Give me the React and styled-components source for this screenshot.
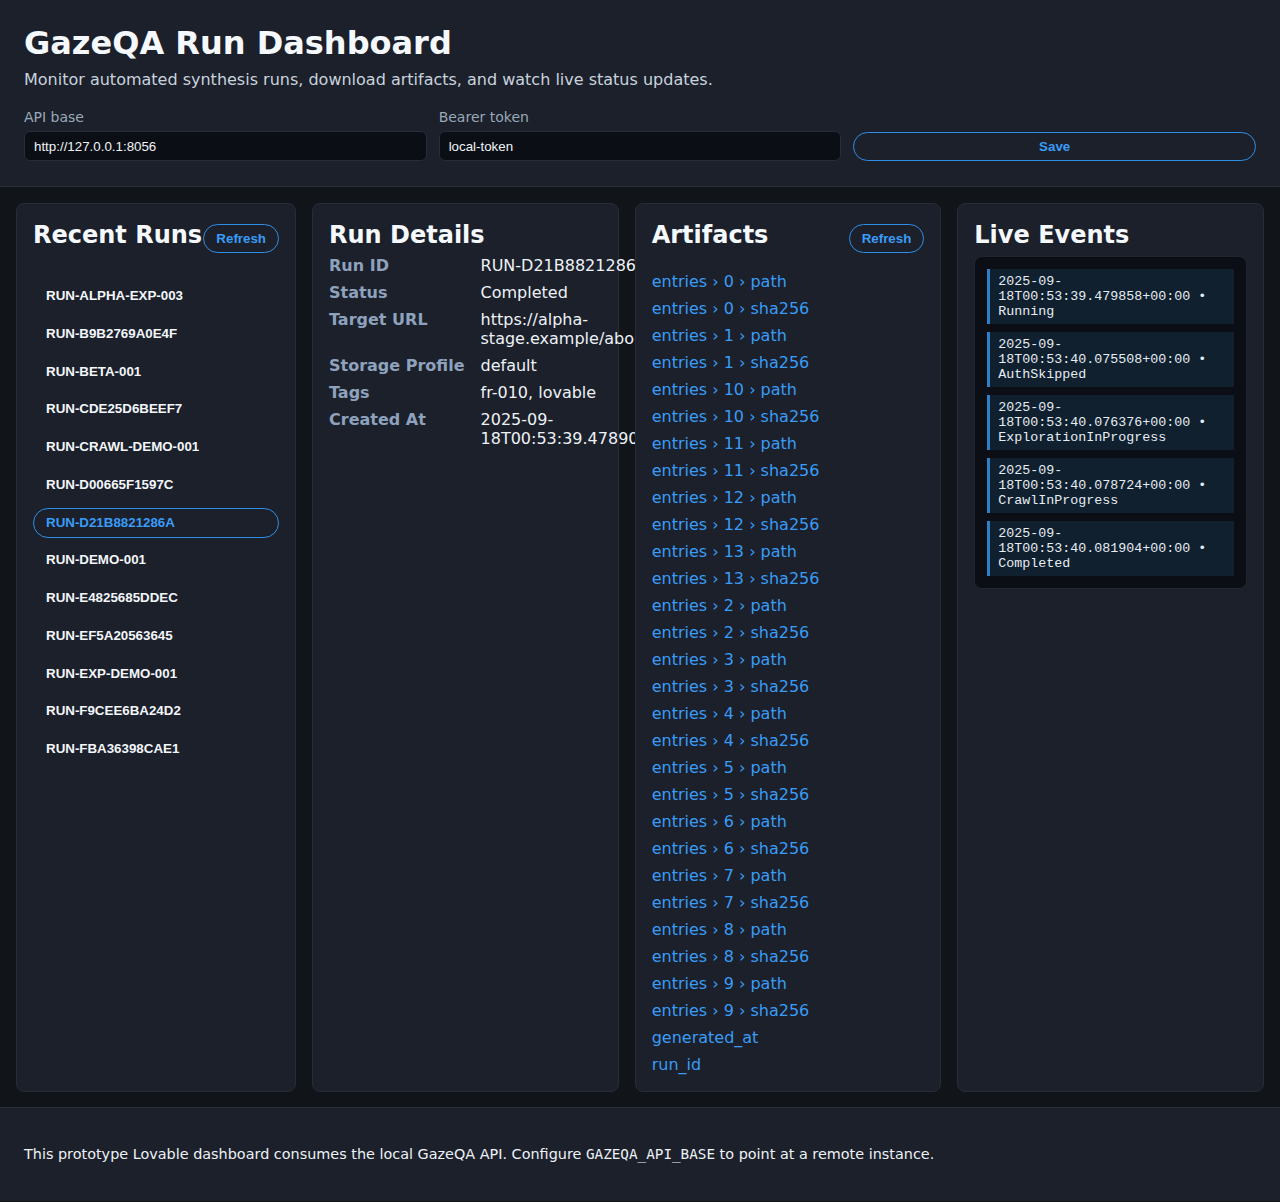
import React from "react";
import styled, { createGlobalStyle } from "styled-components";

const GlobalStyle = createGlobalStyle`
  * { box-sizing: border-box; }
  body {
    margin: 0;
    background: #111419;
    color: #e6edf3;
    font-family: "DejaVu Sans", sans-serif;
  }
`;

const Header = styled.header`
  background: #1b202b;
  border-bottom: 1px solid #2a303c;
  padding: 25px 24px 25px;
`;

const Title = styled.h1`
  margin: 0;
  font-size: 32px;
  font-weight: 700;
  line-height: 37px;
  color: #f5f8fc;
`;

const Subtitle = styled.p`
  margin: 8px 0 0;
  font-size: 16px;
  color: #c9d3de;
`;

const Settings = styled.div`
  display: grid;
  grid-template-columns: repeat(3, 1fr);
  gap: 12px;
  align-items: end;
  margin-top: 20px;
`;

const Field = styled.label`
  display: flex;
  flex-direction: column;
  gap: 6px;
  font-size: 14px;
  color: #9aa8b8;
`;

const Input = styled.input`
  height: 30px;
  padding: 0 9px;
  border: 1px solid #262e3b;
  border-radius: 6px;
  background: #0b0f15;
  color: #f0f4f8;
  font: 13.333px "Liberation Sans", Arial, sans-serif;
  outline: none;
`;

const PillButton = styled.button`
  padding: 6px 12px;
  border: 1px solid #2f8fe6;
  border-radius: 999px;
  background: transparent;
  color: #3a9cf6;
  font: 700 13.333px/15px "Liberation Sans", Arial, sans-serif;
  cursor: pointer;
  ${(p) => (p.$wide ? "width: 100%;" : "")}
`;

const Main = styled.main`
  display: grid;
  grid-template-columns: 280px repeat(3, 1fr);
  gap: 16px;
  padding: 16px 16px 15px;
`;

const Panel = styled.section`
  display: flex;
  flex-direction: column;
  gap: 8px;
  min-width: 0;
  padding: 17px 16px;
  background: #1b202b;
  border: 1px solid #262d39;
  border-radius: 8px;
`;

const PanelHead = styled.div`
  display: flex;
  justify-content: space-between;
  align-items: baseline;
`;

const PanelTitle = styled.h2`
  margin: 0;
  font-size: 24px;
  font-weight: 700;
  line-height: 28px;
  color: #f5f8fc;
  white-space: nowrap;
`;

const RunList = styled.div`
  display: flex;
  flex-direction: column;
  gap: 7.75px;
  margin-top: 20px;
`;

const RunItem = styled.button`
  padding: 7px 12px;
  border: 1px solid ${(p) => (p.$active ? "#2f8fe6" : "transparent")};
  border-radius: 999px;
  background: transparent;
  color: ${(p) => (p.$active ? "#3a9cf6" : "#f3f6fa")};
  font: 700 13.333px/14px "Liberation Sans", Arial, sans-serif;
  text-align: left;
  cursor: pointer;
`;

const Details = styled.dl`
  display: grid;
  grid-template-columns: max-content 1fr;
  column-gap: 16px;
  row-gap: 8px;
  margin: -1px 0 0;
  font-size: 16px;
  line-height: 19px;
`;

const Term = styled.dt`
  font-weight: 700;
  color: #8ea2bd;
`;

const Value = styled.dd`
  margin: 0;
  color: #eef2f6;
`;

const ArtifactList = styled.div`
  display: flex;
  flex-direction: column;
  gap: 8px;
  margin-top: 11px;
`;

const ArtifactLink = styled.a`
  font-size: 16px;
  line-height: 19px;
  color: #3a9cf6;
  text-decoration: none;
`;

const EventBox = styled.div`
  margin-top: -1px;
  padding: 12px 12px 4px;
  background: #0b0f15;
  border: 1px solid #1f2631;
  border-radius: 8px;
`;

const EventItem = styled.div`
  margin-bottom: 8px;
  padding: 5px 8px;
  background: #10202f;
  border-left: 3px solid #2f7fc8;
  font: 13.333px/15px "Liberation Mono", "Courier New", monospace;
  color: #e6edf3;
`;

const Footer = styled.footer`
  background: #1b202b;
  border-top: 1px solid #2a303c;
  padding: 38px 24px 39px;
  font-size: 14.4px;
  color: #eef2f6;
`;

const Code = styled.code`
  font-family: "DejaVu Sans Mono", monospace;
  font-size: 14.3px;
`;

const runs = [
  "RUN-ALPHA-EXP-003",
  "RUN-B9B2769A0E4F",
  "RUN-BETA-001",
  "RUN-CDE25D6BEEF7",
  "RUN-CRAWL-DEMO-001",
  "RUN-D00665F1597C",
  "RUN-D21B8821286A",
  "RUN-DEMO-001",
  "RUN-E4825685DDEC",
  "RUN-EF5A20563645",
  "RUN-EXP-DEMO-001",
  "RUN-F9CEE6BA24D2",
  "RUN-FBA36398CAE1",
];

const details = [
  ["Run ID", "RUN-D21B8821286A"],
  ["Status", "Completed"],
  ["Target URL", "https://alpha-stage.example/about"],
  ["Storage Profile", "default"],
  ["Tags", "fr-010, lovable"],
  ["Created At", "2025-09-18T00:53:39.478901+00:00"],
];

const artifacts = [
  ...["0", "1", "10", "11", "12", "13", "2", "3", "4", "5", "6", "7", "8", "9"].flatMap(
    (n) => [`entries › ${n} › path`, `entries › ${n} › sha256`]
  ),
  "generated_at",
  "run_id",
];

const events = [
  ["2025-09-18T00:53:39.479858+00:00", "Running"],
  ["2025-09-18T00:53:40.075508+00:00", "AuthSkipped"],
  ["2025-09-18T00:53:40.076376+00:00", "ExplorationInProgress"],
  ["2025-09-18T00:53:40.078724+00:00", "CrawlInProgress"],
  ["2025-09-18T00:53:40.081904+00:00", "Completed"],
];

export default function App() {
  return (
    <>
      <GlobalStyle />
      <Header>
        <Title>GazeQA Run Dashboard</Title>
        <Subtitle>
          Monitor automated synthesis runs, download artifacts, and watch live status updates.
        </Subtitle>
        <Settings>
          <Field>
            API base
            <Input defaultValue="http://127.0.0.1:8056" />
          </Field>
          <Field>
            Bearer token
            <Input defaultValue="local-token" />
          </Field>
          <PillButton $wide>Save</PillButton>
        </Settings>
      </Header>

      <Main>
        <Panel>
          <PanelHead>
            <PanelTitle>Recent Runs</PanelTitle>
            <PillButton>Refresh</PillButton>
          </PanelHead>
          <RunList>
            {runs.map((r) => (
              <RunItem key={r} $active={r === "RUN-D21B8821286A"}>
                {r}
              </RunItem>
            ))}
          </RunList>
        </Panel>

        <Panel>
          <PanelTitle>Run Details</PanelTitle>
          <Details>
            {details.map(([k, v]) => (
              <React.Fragment key={k}>
                <Term>{k}</Term>
                <Value>{v}</Value>
              </React.Fragment>
            ))}
          </Details>
        </Panel>

        <Panel>
          <PanelHead>
            <PanelTitle>Artifacts</PanelTitle>
            <PillButton>Refresh</PillButton>
          </PanelHead>
          <ArtifactList>
            {artifacts.map((a) => (
              <ArtifactLink key={a} href="#">
                {a}
              </ArtifactLink>
            ))}
          </ArtifactList>
        </Panel>

        <Panel>
          <PanelTitle>Live Events</PanelTitle>
          <EventBox>
            {events.map(([t, s]) => (
              <EventItem key={t}>
                {t} • {s}
              </EventItem>
            ))}
          </EventBox>
        </Panel>
      </Main>

      <Footer>
        This prototype Lovable dashboard consumes the local GazeQA API. Configure{" "}
        <Code>GAZEQA_API_BASE</Code> to point at a remote instance.
      </Footer>
    </>
  );
}
